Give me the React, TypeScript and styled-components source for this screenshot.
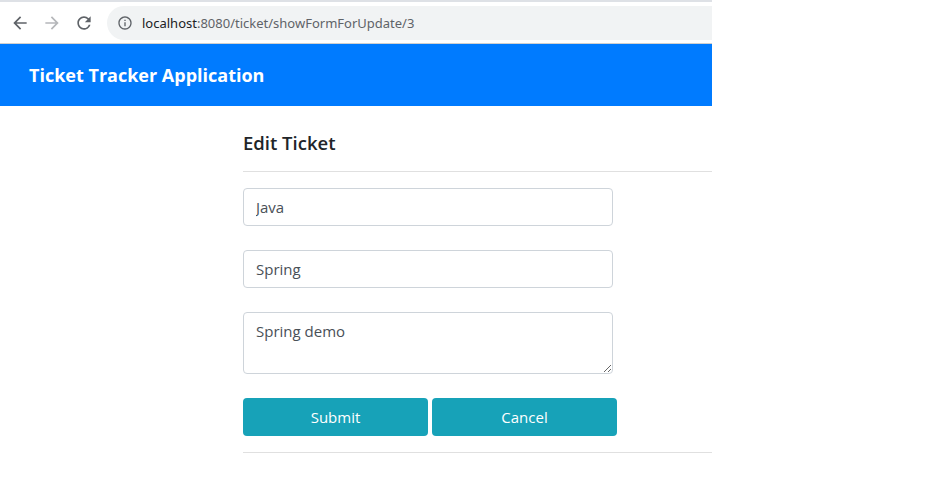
import React from "react";
import styled, { createGlobalStyle } from "styled-components";

const Global = createGlobalStyle`
  html, body { margin: 0; padding: 0; background: #fff; }
  body { font-family: "Open Sans", "Noto Sans", Arial, sans-serif; }
  * { box-sizing: border-box; }
`;

const Frame = styled.div`
  width: 712px;
  display: flex;
  flex-direction: column;
`;

const TopStrip = styled.div`
  height: 2px;
  background: #dee1e6;
`;

const Toolbar = styled.div`
  height: 42px;
  display: flex;
  align-items: center;
  padding: 0 0 0 4px;
  border-bottom: 1px solid #d0d0d0;
  background: #fff;
`;

const NavButton = styled.div`
  width: 32px;
  height: 32px;
  display: flex;
  align-items: center;
  justify-content: center;
`;

const Omnibox = styled.div`
  flex: 1;
  height: 34px;
  margin-left: 7px;
  border-radius: 17px 0 0 17px;
  background: #f1f3f4;
  display: flex;
  align-items: center;
  padding-left: 10px;
  gap: 9px;
  font-family: "Noto Sans", "Open Sans", Arial, sans-serif;
  font-size: 13px;
  color: #5f6368;
`;

const Host = styled.span`
  color: #202124;
`;

const Header = styled.header`
  height: 62px;
  background: #007bff;
  display: flex;
  align-items: center;
  padding-left: 29px;
  color: #fff;
  font-weight: 700;
  font-size: 18px;
`;

const Main = styled.main`
  padding-left: 243px;
  padding-top: 23px;
`;

const Title = styled.h5`
  margin: 0;
  font-size: 18.5px;
  font-weight: 600;
  color: #212529;
  line-height: 28px;
`;

const Rule = styled.hr`
  margin: 0;
  border: 0;
  border-top: 1px solid #e0e0e0;
`;

const TitleRule = styled(Rule)`
  margin-top: 14px;
`;

const Form = styled.form`
  display: flex;
  flex-direction: column;
  align-items: flex-start;
  width: 370px;
  gap: 24px;
  margin-top: 16px;
`;

const Field = styled.input`
  width: 370px;
  height: 38px;
  border: 1px solid #ced4da;
  border-radius: 4px;
  padding: 0 12px;
  font-family: inherit;
  font-size: 15px;
  color: #495057;
  outline: none;
`;

const Area = styled.textarea`
  width: 370px;
  height: 62px;
  border: 1px solid #ced4da;
  border-radius: 4px;
  padding: 6px 12px;
  font-family: inherit;
  font-size: 15px;
  line-height: 24px;
  color: #495057;
  outline: none;
  resize: vertical;
`;

const Buttons = styled.div`
  display: flex;
  gap: 4px;
  flex: none;
`;

const Button = styled.button`
  flex: none;
  width: 185px;
  height: 38px;
  background: #17a2b8;
  border: 0;
  border-radius: 4px;
  color: #fff;
  font-family: inherit;
  font-size: 15px;
`;

const BottomRule = styled(Rule)`
  margin-top: 16px;
`;

const Arrow = ({ dir, color }: { dir: "l" | "r"; color: string }) => (
  <svg width="20" height="20" viewBox="0 0 24 24">
    <path
      d={dir === "l" ? "M20 11H7.83l5.59-5.59L12 4l-8 8 8 8 1.41-1.41L7.83 13H20v-2z" : "M12 4l-1.41 1.41L16.17 11H4v2h12.17l-5.58 5.59L12 20l8-8z"}
      fill={color}
    />
  </svg>
);

export default function App() {
  return (
    <>
      <Global />
      <Frame>
        <TopStrip />
        <Toolbar>
          <NavButton>
            <Arrow dir="l" color="#5f6368" />
          </NavButton>
          <NavButton>
            <Arrow dir="r" color="#b5b7ba" />
          </NavButton>
          <NavButton>
            <svg width="20" height="20" viewBox="0 0 24 24">
              <path
                d="M17.65 6.35A7.958 7.958 0 0012 4c-4.42 0-7.99 3.58-7.99 8s3.57 8 7.99 8c3.73 0 6.84-2.55 7.730-6h-2.08A5.99 5.99 0 0112 18c-3.31 0-6-2.69-6-6s2.69-6 6-6c1.66 0 3.14.69 4.22 1.78L13 11h7V4l-2.35 2.35z"
                fill="#5f6368"
              />
            </svg>
          </NavButton>
          <Omnibox>
            <svg width="16" height="16" viewBox="0 0 24 24">
              <path
                d="M11 7h2v2h-2zm0 4h2v6h-2zm1-9C6.48 2 2 6.48 2 12s4.48 10 10 10 10-4.48 10-10S17.52 2 12 2zm0 18c-4.41 0-8-3.59-8-8s3.59-8 8-8 8 3.59 8 8-3.59 8-8 8z"
                fill="#5f6368"
              />
            </svg>
            <span>
              <Host>localhost</Host>:8080/ticket/showFormForUpdate/3
            </span>
          </Omnibox>
        </Toolbar>
        <Header>Ticket Tracker Application</Header>
        <Main>
          <Title>Edit Ticket</Title>
          <TitleRule />
          <Form>
            <Field defaultValue="Java" />
            <Field defaultValue="Spring" />
            <Area defaultValue="Spring demo" />
            <Buttons>
              <Button type="button">Submit</Button>
              <Button type="button">Cancel</Button>
            </Buttons>
          </Form>
          <BottomRule />
        </Main>
      </Frame>
    </>
  );
}
